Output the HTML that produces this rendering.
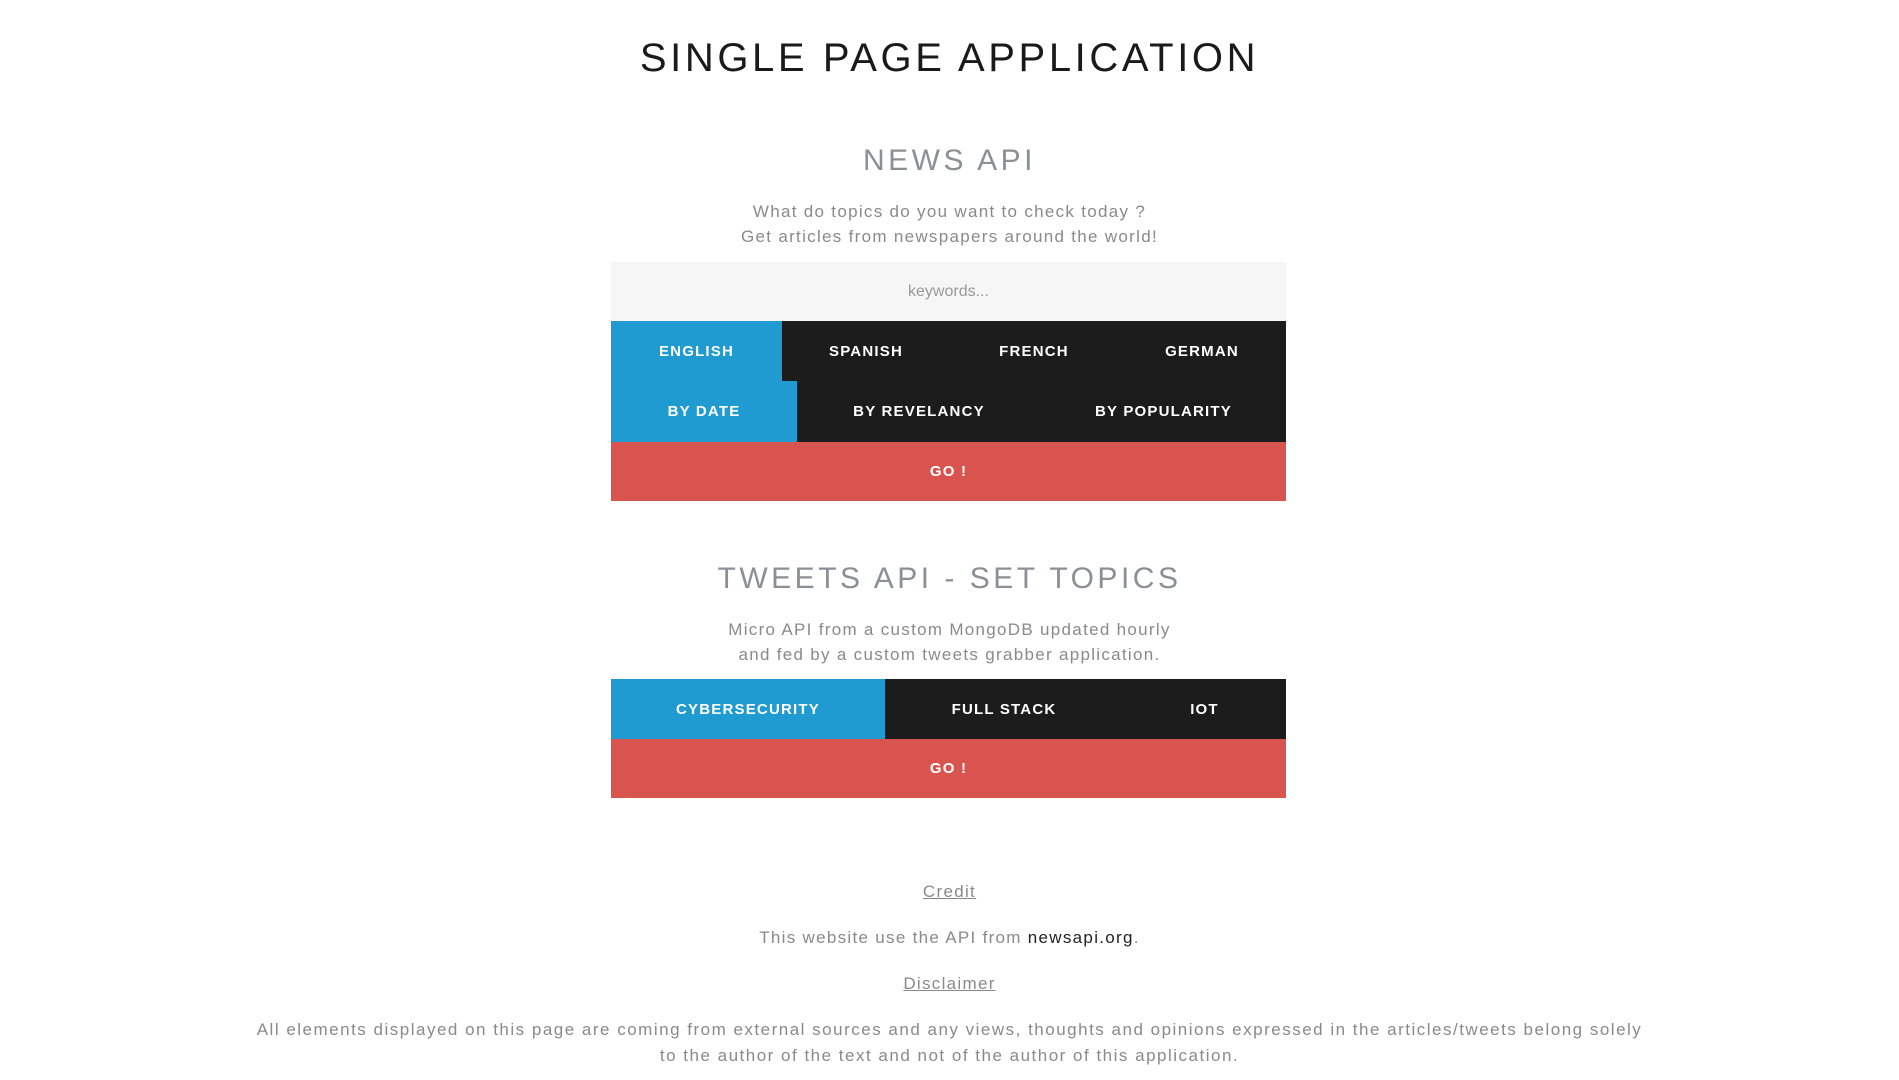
<!DOCTYPE html>
<html><head><meta charset="utf-8"><style>
*{margin:0;padding:0;box-sizing:border-box}
body{width:1899px;height:1080px;background:#fff;font-family:"Liberation Sans",sans-serif;position:relative;overflow:hidden;color:#888}
.c{position:absolute;left:0;width:1899px;text-align:center;white-space:nowrap}
h1{font-weight:400;color:#1a1a1a;font-size:40px;letter-spacing:3.6px}
h2{font-weight:400;color:#8a9095;font-size:30px;letter-spacing:3.5px}
.p{font-size:17px;letter-spacing:1.3px;color:#8a8a8a}
.box{position:absolute;left:611px;width:675px}
.row{display:flex;height:60px}
.row div{display:flex;align-items:center;justify-content:center;color:#fff;font-weight:bold;font-size:15px;letter-spacing:1.2px}
.b{background:#1f9bd1}.d{background:#1c1c1c}.r{background:#d9534f}
a{color:#8a8a8a;text-decoration:underline}
</style></head><body>
<div class="c" style="top:36px"><h1>SINGLE PAGE APPLICATION</h1></div>
<div class="c" style="top:144px"><h2>NEWS API</h2></div>
<div class="c p" style="top:202px">What do topics do you want to check today ?</div>
<div class="c p" style="top:227px">Get articles from newspapers around the world!</div>
<div class="box" style="top:262px">
<div style="height:59px;background:#f6f6f7;display:flex;align-items:center;justify-content:center;color:#999;font-size:16px">keywords...</div>
<div class="row"><div class="b" style="width:171px">ENGLISH</div><div class="d" style="width:168px">SPANISH</div><div class="d" style="width:168px">FRENCH</div><div class="d" style="width:168px">GERMAN</div></div>
<div class="row" style="height:61px"><div class="b" style="width:186px">BY DATE</div><div class="d" style="width:244px">BY REVELANCY</div><div class="d" style="width:245px">BY POPULARITY</div></div>
<div class="row" style="height:59px"><div class="r" style="width:675px">GO !</div></div>
</div>
<div class="c" style="top:562px"><h2>TWEETS API - SET TOPICS</h2></div>
<div class="c p" style="top:620px">Micro API from a custom MongoDB updated hourly</div>
<div class="c p" style="top:645px">and fed by a custom tweets grabber application.</div>
<div class="box" style="top:679px">
<div class="row"><div class="b" style="width:274px">CYBERSECURITY</div><div class="d" style="width:238px">FULL STACK</div><div class="d" style="width:163px">IOT</div></div>
<div class="row" style="height:59px"><div class="r" style="width:675px">GO !</div></div>
</div>
<div class="c p" style="top:882px"><a>Credit</a></div>
<div class="c p" style="top:928px">This website use the API from <span style="color:#222">newsapi.org</span>.</div>
<div class="c p" style="top:974px"><a>Disclaimer</a></div>
<div class="c p" style="top:1020px;letter-spacing:1.5px">All elements displayed on this page are coming from external sources and any views, thoughts and opinions expressed in the articles/tweets belong solely</div>
<div class="c p" style="top:1046px;letter-spacing:1.5px">to the author of the text and not of the author of this application.</div>
</body></html>
